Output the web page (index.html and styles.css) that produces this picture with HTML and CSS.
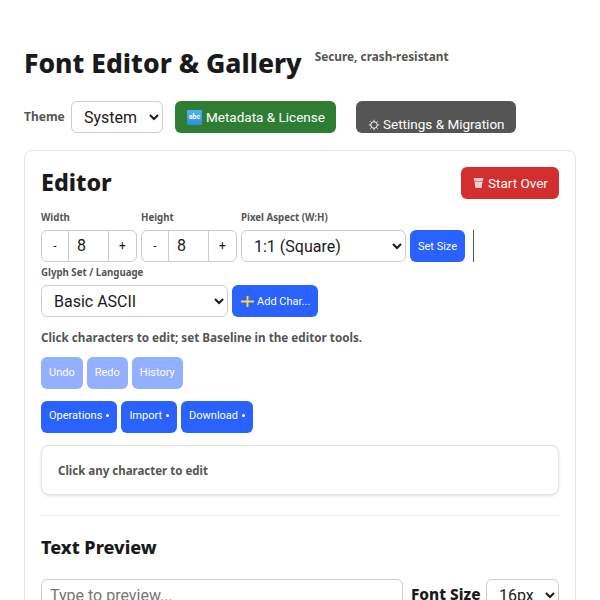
FILE: index.html
```html
<!DOCTYPE html>
<html lang="en">
<head>
<meta charset="utf-8">
<title>Font Editor &amp; Gallery</title>
<link rel="stylesheet" href="styles.css">
</head>
<body>
<header class="title-row">
  <h1>Font Editor &amp; Gallery</h1>
  <span class="tagline">Secure, crash-resistant</span>
</header>
<div class="theme-row">
  <label class="theme-label">Theme</label>
  <select class="sel theme-sel"><option>System</option></select>
  <button class="btn btn-green"><span class="abc">abc</span> Metadata &amp; License</button>
  <button class="btn btn-gray"><svg class="gear" viewBox="0 0 16 16"><circle cx="8" cy="8" r="4.4" fill="none" stroke="#fff" stroke-width="1.3"/><path d="M8 1v2.4M8 12.6V15M1 8h2.4M12.6 8H15M3 3l1.8 1.8M11.2 11.2L13 13M3 13l1.8-1.8M11.2 4.8L13 3" stroke="#fff" stroke-width="1.1"/></svg><span>Settings &amp; Migration</span></button>
</div>
<main class="card">
  <div class="editor-head">
    <h2>Editor</h2>
    <button class="btn btn-red"><svg class="bin" viewBox="0 0 14 14"><path d="M1.5 2.5h11l-1.6 11h-7.8z" fill="#f6cfcf"/><path d="M2 5h10" stroke="#d32f2f" stroke-width=".7"/><path d="M1 .8h12v2.2H1z" fill="#fbe6e6"/></svg><span>Start Over</span></button>
  </div>
  <div class="size-row">
    <div class="field">
      <label>Width</label>
      <div class="stepper"><span class="step">-</span><span class="val">8</span><span class="step step-r">+</span></div>
    </div>
    <div class="field">
      <label>Height</label>
      <div class="stepper"><span class="step">-</span><span class="val">8</span><span class="step step-r">+</span></div>
    </div>
    <div class="field">
      <label>Pixel Aspect (W:H)</label>
      <select class="sel aspect-sel"><option>1:1 (Square)</option></select>
    </div>
    <button class="btn btn-blue btn-small">Set Size</button>
    <span class="vline"></span>
  </div>
  <label class="glyph-label">Glyph Set / Language</label>
  <div class="glyph-row">
    <select class="sel glyph-sel"><option>Basic ASCII</option></select>
    <button class="btn btn-blue btn-add"><svg class="plus" viewBox="0 0 14 14"><path d="M7 1v12M0 7h14" stroke="#fdd835" stroke-width="2"/></svg><span>Add Char...</span></button>
  </div>
  <p class="hint">Click characters to edit; set Baseline in the editor tools.</p>
  <div class="btn-row">
    <button class="btn btn-blue btn-small dim">Undo</button>
    <button class="btn btn-blue btn-small dim">Redo</button>
    <button class="btn btn-blue btn-small dim">History</button>
  </div>
  <div class="btn-row">
    <button class="btn btn-blue btn-small btn-menu">Operations<span class="dot"></span></button>
    <button class="btn btn-blue btn-small btn-menu">Import<span class="dot"></span></button>
    <button class="btn btn-blue btn-small btn-menu">Download<span class="dot"></span></button>
  </div>
  <div class="edit-box">Click any character to edit</div>
  <hr class="divider">
  <h3>Text Preview</h3>
  <div class="preview-row">
    <input class="preview-input" placeholder="Type to preview...">
    <label class="size-label">Font Size</label>
    <select class="sel size-sel"><option>16px</option></select>
  </div>
</main>
</body>
</html>
```
FILE: styles.css
```css
* { box-sizing: border-box; }
html, body { height: 600px; overflow: hidden; }
body {
  margin: 0;
  padding: 45px 24px 0;
  background: #fff;
  color: #1a1a1a;
  font-family: Roboto, sans-serif;
}
.title-row { display: flex; align-items: flex-start; gap: 13px; height: 36px; }
h1 {
  margin: 0;
  font: 800 26.5px/36px "Noto Sans", sans-serif;
  color: #1a1a1a;
}
.tagline {
  font: 700 11.8px/16px "Noto Sans", sans-serif;
  color: #555;
  margin-top: 3px;
}
.theme-row { display: flex; align-items: stretch; margin-top: 20px; height: 32px; }
.theme-label {
  font: 700 12px/32px "Noto Sans", sans-serif;
  color: #555;
  width: 47px;
}
.sel {
  font-family: Roboto, sans-serif;
  font-size: 16px;
  color: #1a1a1a;
  background: #fff;
  border: 1px solid #ccc;
  border-radius: 6px;
  padding: 0 8px;
  height: 32px;
}
.theme-sel { width: 92px; padding-right: 0; }
.btn {
  border: 0;
  border-radius: 6px;
  color: #fff;
  font-family: Roboto, sans-serif;
  font-size: 13.5px;
  padding: 0 12px;
  height: 32px;
  white-space: nowrap;
}
.btn-green {
  background: #2e7d32;
  width: 161px;
  margin-left: 12px;
  display: flex;
  align-items: center;
  gap: 4px;
}
.btn-gray {
  background: #555;
  width: 160px;
  margin-left: 20px;
  display: flex;
  align-items: flex-end;
  gap: 3px;
  line-height: 17px;
}
.abc {
  flex: none;
  width: 15px;
  height: 15px;
  background: linear-gradient(#4fb3f0, #2b8fe0);
  border-radius: 1px;
  font-size: 7px;
  font-weight: 700;
  line-height: 15px;
  text-align: center;
}
.gear { flex: none; width: 12px; height: 12px; margin-bottom: 2px; }
.btn-red {
  background: #d32f2f;
  width: 98px;
  display: flex;
  align-items: center;
  gap: 4px;
  padding-bottom: 1px;
}
.bin { flex: none; width: 11px; height: 12px; }
.btn-blue { background: #2962ff; }
.btn-small { font-size: 11px; padding: 0 8px 2px; }
.dim { opacity: .5; }
.btn-menu { display: flex; align-items: center; padding-bottom: 4px; }
.dot {
  width: 3px;
  height: 3px;
  margin-left: 4px;
  border-radius: 50%;
  background: #fff;
  flex: none;
}
.card {
  margin-top: 17px;
  border: 1px solid #e2e2e2;
  border-radius: 8px;
  padding: 16px;
  height: 600px;
  background: #fff;
}
.editor-head { display: flex; justify-content: space-between; align-items: center; height: 32px; }
h2 { margin: -1px 0 1px; font: 800 23.3px/32px "Noto Sans", sans-serif; color: #1a1a1a; }
.size-row { display: flex; align-items: flex-end; gap: 4px; margin-top: 12px; }
.field { display: flex; flex-direction: column; }
.field label, .glyph-label {
  display: block;
  font: 700 9.7px/13px "Noto Sans", sans-serif;
  color: #555;
}
.field label { margin-bottom: 6px; }
.stepper {
  display: flex;
  width: 96px;
  height: 32px;
  border: 1px solid #ccc;
  border-radius: 6px;
  font-size: 12px;
}
.step { width: 26px; text-align: center; line-height: 30px; }
.step-r { width: 27px; }
.val {
  flex: 1;
  border: solid #ccc;
  border-width: 0 1px;
  padding-left: 8px;
  font-size: 16px;
  line-height: 30px;
}
.aspect-sel { width: 165px; }
.size-row .btn-small { width: 55px; padding: 0; }
.vline { width: 1px; height: 32px; background: #555; margin-left: 4px; }
.glyph-label { margin-top: 4px; }
.glyph-row { display: flex; gap: 4px; margin-top: 6px; }
.glyph-sel { width: 187px; }
.btn-add {
  width: 86px;
  padding: 0 0 0 9px;
  font-size: 11px;
  display: flex;
  align-items: center;
  gap: 3px;
}
.plus { flex: none; width: 13px; height: 13px; }
.hint {
  margin: 12px 0 0;
  font: 700 11.7px/16px "Noto Sans", sans-serif;
  color: #555;
}
.btn-row { display: flex; gap: 4px; margin-top: 12px; }
.edit-box {
  margin-top: 12px;
  height: 50px;
  border: 1px solid #e2e2e2;
  border-radius: 8px;
  box-shadow: 0 1px 3px rgba(0,0,0,.12);
  padding-left: 16px;
  font: 700 11.5px/49px "Noto Sans", sans-serif;
  color: #555;
}
.divider { border: 0; border-top: 1px solid #eee; margin: 20px 0 0; }
h3 { margin: 17px 0 0; font: 800 18px/28px "Noto Sans", sans-serif; color: #1a1a1a; }
.preview-row { display: flex; align-items: center; margin-top: 18px; }
.preview-input {
  width: 362px;
  height: 32px;
  border: 1px solid #ccc;
  border-radius: 6px;
  padding: 0 8px;
  font: 16px Roboto, sans-serif;
}
.preview-input::placeholder { color: #757575; }
.size-label { font: 800 15.4px/32px "Noto Sans", sans-serif; margin-left: 8px; width: 75px; }
.size-sel { width: 73px; }
```
